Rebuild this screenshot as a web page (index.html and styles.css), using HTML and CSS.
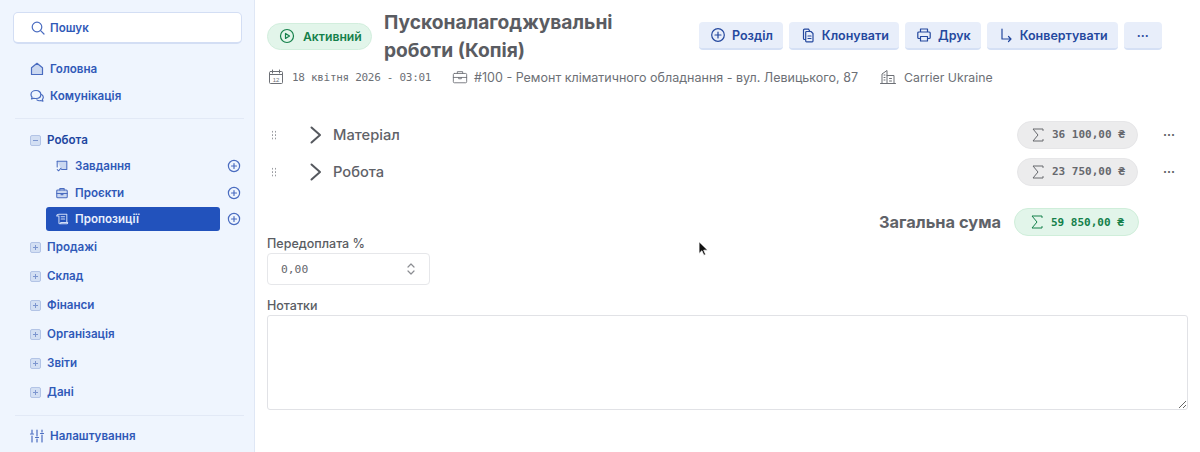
FILE: index.html
```html
<!DOCTYPE html>
<html lang="uk">
<head>
    <meta charset="UTF-8">
    <meta name="viewport" content="width=device-width, initial-scale=1.0">
    <title>Пропозиції</title>
    <link rel="stylesheet" href="styles.css">
</head>
<body>
    <div class="layout">
        <!-- Sidebar -->
        <aside class="sidebar">
            <div class="search">
                <svg class="icon" viewBox="0 0 16 16"><circle cx="7" cy="7" r="4.8"/><path d="M10.6 10.6 14 14"/></svg>
                <span>Пошук</span>
            </div>
            <nav class="nav-top">
                <a class="nav-link">
                    <svg class="icon" viewBox="0 0 16 16"><path class="fill" d="M2.5 13.5V6.8L8 2.3l5.500 4.500v6.700z"/></svg>
                    <span>Головна</span>
                </a>
                <a class="nav-link">
                    <svg class="icon" viewBox="0 0 16 16"><path d="M7 2.500c-3 0-5 1.800-5 4 0 1 .4 1.900 1.100 2.600L2.500 11l2.400-.8c.6.200 1.300.3 2.100.3 3 0 4.800-1.800 4.800-4s-1.800-4-4.800-4z"/><path d="M12.600 6.500c1 .6 1.700 1.600 1.700 2.800 0 .8-.3 1.500-.9 2.100l.5 1.800-2.100-.7c-1.300.4-2.900.2-3.900-.6"/></svg>
                    <span>Комунікація</span>
                </a>
            </nav>
            <div class="divider"></div>
            <div class="nav-group-head open">
                <span class="toggle"><i></i></span>
                <span>Робота</span>
            </div>
            <div class="sub-list">
                <div class="sub-row">
                    <a class="sub-link">
                        <svg class="icon" viewBox="0 0 16 16"><path class="fill" d="M2.500 2.500h11v9.500H7.500"/><path d="M2.500 2.500v6.500M2.500 12l1.500 1.500 3-3"/></svg>
                        <span>Завдання</span>
                    </a>
                    <svg class="add" viewBox="0 0 14 14"><circle cx="7" cy="7" r="5.600"/><path d="M7 4.500v5M4.500 7h5"/></svg>
                </div>
                <div class="sub-row">
                    <a class="sub-link">
                        <svg class="icon" viewBox="0 0 16 16"><rect class="fill" x="2" y="4.500" width="12" height="9" rx="1.200"/><path d="M5.500 4.500V3h5v1.500M2 8.500h12M7 8.500v1.500h2V8.500"/></svg>
                        <span>Проєкти</span>
                    </a>
                    <svg class="add" viewBox="0 0 14 14"><circle cx="7" cy="7" r="5.600"/><path d="M7 4.500v5M4.500 7h5"/></svg>
                </div>
                <div class="sub-row">
                    <a class="sub-link active">
                        <svg class="icon" viewBox="0 0 16 16"><path d="M4.500 2.500h9v9M4.500 2.500c-1.500 0-2.500.5-2.500 2h2.500v8c0 .7.500 1 1 1h8c.7 0 1-.5 1-1.500H6.500v1.500M7 5.500h4M7 8h4"/></svg>
                        <span>Пропозиції</span>
                    </a>
                    <svg class="add" viewBox="0 0 14 14"><circle cx="7" cy="7" r="5.600"/><path d="M7 4.500v5M4.500 7h5"/></svg>
                </div>
            </div>
            <div class="nav-group">
                <div class="nav-group-head"><span class="toggle plus"><i></i></span><span>Продажі</span></div>
                <div class="nav-group-head"><span class="toggle plus"><i></i></span><span>Склад</span></div>
                <div class="nav-group-head"><span class="toggle plus"><i></i></span><span>Фінанси</span></div>
                <div class="nav-group-head"><span class="toggle plus"><i></i></span><span>Організація</span></div>
                <div class="nav-group-head"><span class="toggle plus"><i></i></span><span>Звіти</span></div>
                <div class="nav-group-head"><span class="toggle plus"><i></i></span><span>Дані</span></div>
            </div>
            <div class="divider bottom"></div>
            <a class="nav-link">
                <svg class="icon" viewBox="0 0 16 16"><path d="M3 2v3M3 8v6M8 2v6M8 11v3M13 2v2M13 7v7M1.500 6h3M6.500 9.500h3M11.500 5.500h3"/></svg>
                <span>Налаштування</span>
            </a>
        </aside>

        <!-- Main content -->
        <main class="content">
            <div class="top-row">
                <div class="status">
                    <svg viewBox="0 0 16 16"><circle cx="8" cy="8" r="6.500"/><path d="M6.500 5.500v5l4-2.500z"/></svg>
                    <span>Активний</span>
                </div>
                <h1 class="page-title">Пусконалагоджувальні роботи (Копія)</h1>
                <div class="actions">
                    <button class="btn"><svg viewBox="0 0 16 16"><circle cx="8" cy="8" r="6.300"/><path d="M8 5v6M5 8h6"/></svg>Розділ</button>
                    <button class="btn"><svg viewBox="0 0 16 16"><path d="M6.500 4.500h4.500l2 2v7.500a.8.8 0 0 1-.8.8H6.500a.8.8 0 0 1-.8-.8V5.300a.8.8 0 0 1 .8-.8zM5.700 12.500H4.500a1 1 0 0 1-1-1V3.200a1 1 0 0 1 1-1h4l1.500 2.300M8 9h3M8 11.500h3"/></svg>Клонувати</button>
                    <button class="btn"><svg viewBox="0 0 16 16"><path d="M4.500 5V2h7v3M4.500 11.500H2.800a1 1 0 0 1-1-1V6a1 1 0 0 1 1-1h10.400a1 1 0 0 1 1 1v4.500a1 1 0 0 1-1 1h-1.700M4.500 9.500h7V14h-7z"/></svg>Друк</button>
                    <button class="btn"><svg viewBox="0 0 16 16"><path d="M4 2v10h9M10.500 9.500 13 12l-2.500 2.500"/></svg>Конвертувати</button>
                    <button class="btn btn-more">···</button>
                </div>
            </div>

            <div class="meta">
                <span class="meta-item date">
                    <svg viewBox="0 0 16 16"><rect x="1.500" y="2.500" width="13" height="12" rx="1"/><path d="M1.500 5.500h13M4.500 1v3M11.500 1v3"/><text x="8" y="12.800" class="cal-num">12</text></svg>
                    <span class="meta-date">18 квітня 2026 - 03:01</span>
                </span>
                <span class="meta-item job">
                    <svg viewBox="0 0 18 16"><rect x="1.500" y="4" width="15" height="10.500" rx="1.200"/><path d="M6 4V2h6v2M1.500 8.500h15M7.500 8.500v1.500h3V8.500"/></svg>
                    <span>#100 - Ремонт кліматичного обладнання - вул. Левицького, 87</span>
                </span>
                <span class="meta-item company">
                    <svg viewBox="0 0 16 16"><path d="M.5 14.500h15M2 14.500V5l5-3.500v13M7 6.500h7v8M4 6h1M4 8.500h1M4 11h1M9.500 9.500h2M9.500 12h2"/></svg>
                    <span>Carrier Ukraine</span>
                </span>
            </div>

            <div class="sections">
                <div class="section-row">
                    <span class="grip"></span>
                    <svg class="chevron" viewBox="0 0 12 18"><path d="M1.500 1.500 10 9l-8.500 7.500"/></svg>
                    <span class="section-name">Матеріал</span>
                    <span class="sum"><svg viewBox="0 0 14 14"><path d="M12 2.500V1H2l5 6-5 6h10v-1.500"/></svg>36 100,00 ₴</span>
                    <span class="dots">···</span>
                </div>
                <div class="section-row">
                    <span class="grip"></span>
                    <svg class="chevron" viewBox="0 0 12 18"><path d="M1.500 1.500 10 9l-8.500 7.500"/></svg>
                    <span class="section-name">Робота</span>
                    <span class="sum"><svg viewBox="0 0 14 14"><path d="M12 2.500V1H2l5 6-5 6h10v-1.500"/></svg>23 750,00 ₴</span>
                    <span class="dots">···</span>
                </div>
            </div>

            <div class="total">
                <span class="total-label">Загальна сума</span>
                <span class="sum sum-total"><svg viewBox="0 0 14 14"><path d="M12 2.500V1H2l5 6-5 6h10v-1.500"/></svg>59 850,00 ₴</span>
            </div>

            <label class="field-label">Передоплата %</label>
            <div class="number-input">
                <span>0,00</span>
                <svg viewBox="0 0 10 14"><path d="M2 5l3-3 3 3M2 9l3 3 3-3"/></svg>
            </div>

            <label class="field-label notes-label">Нотатки</label>
            <textarea class="notes"></textarea>
        </main>
    </div>

    <svg class="cursor" viewBox="0 0 12 18"><path d="M1 1v13l3.200-3 2.200 5 2-.9-2.200-4.800H10.500z"/></svg>
</body>
</html>
```

FILE: styles.css
```css
* {
    margin: 0;
    padding: 0;
    box-sizing: border-box;
}

html, body {
    height: 452px;
    overflow: hidden;
}

body {
    font-family: Inter, 'Noto Sans', sans-serif;
    background: white;
    color: #5c5f66;
}

.layout {
    display: flex;
    height: 452px;
}

svg {
    fill: none;
    stroke: currentColor;
    stroke-width: 1.2;
    stroke-linecap: round;
    stroke-linejoin: round;
    flex-shrink: 0;
}

/* Sidebar */
.sidebar {
    width: 255px;
    flex-shrink: 0;
    background: #eff5fe;
    border-right: 1px solid #dfe7f5;
    padding: 12px 12px 0 13px;
    color: #3059b8;
    font-size: 11.600px;
    font-weight: 600;
}

.icon {
    width: 16px;
    height: 16px;
    color: #4a6cc0;
}

.icon .fill {
    fill: #cbd8f0;
}

.search {
    display: flex;
    align-items: center;
    gap: 4px;
    width: 229px;
    height: 32px;
    padding-left: 16px;
    background: white;
    border: 1px solid #d3def4;
    border-bottom-width: 2px;
    border-radius: 5px;
}

.nav-top {
    margin-top: 11px;
}

.nav-link {
    display: flex;
    align-items: center;
    gap: 5px;
    height: 27px;
    padding-left: 16px;
}

.divider {
    width: 229px;
    height: 1px;
    margin: 9px 0 8px 2px;
    background: #e2e9f6;
}

.divider.bottom {
    margin: 8px 0 7px 2px;
}

.nav-group-head {
    display: flex;
    align-items: center;
    gap: 6px;
    height: 29px;
    padding-left: 17px;
}

.nav-group-head.open {
    height: 26px;
    color: #20459f;
}

.toggle {
    position: relative;
    width: 11px;
    height: 11px;
    background: #d3dff3;
    border: 1px solid #b3c4e6;
    border-radius: 2px;
}

.toggle i {
    position: absolute;
    left: 2px;
    top: 4px;
    width: 5px;
    height: 1px;
    background: #7d96cf;
}

.toggle.plus::after {
    content: '';
    position: absolute;
    left: 4px;
    top: 2px;
    width: 1px;
    height: 5px;
    background: #7d96cf;
}

.sub-row {
    display: flex;
    align-items: center;
    height: 26.500px;
    padding-left: 33px;
}

.sub-link {
    display: flex;
    align-items: center;
    gap: 6px;
    width: 174px;
    height: 24px;
    padding-left: 9px;
    border-radius: 3px;
}

.sub-link .icon {
    width: 14px;
    height: 14px;
}

.sub-link.active {
    background: #2252bc;
    color: #e8effc;
}

.sub-link.active .icon {
    color: #cfdcf6;
}

.add {
    width: 14px;
    height: 14px;
    margin-left: 7px;
    color: #4a6cc0;
}

/* Main */
.content {
    flex: 1;
    padding: 8px 12px 0;
    min-width: 0;
}

.top-row {
    display: flex;
    align-items: center;
}

.status {
    display: flex;
    align-items: center;
    gap: 8px;
    width: 105px;
    height: 27px;
    padding-left: 11px;
    background: #e2f5ea;
    border: 1px solid #d2eedd;
    border-radius: 14px;
    color: #14804a;
    font-size: 12.200px;
    font-weight: 600;
    white-space: nowrap;
}

.status svg {
    width: 16px;
    height: 16px;
}

.page-title {
    width: 260px;
    margin-left: 12px;
    font-size: 19.200px;
    line-height: 28px;
    font-weight: 700;
    color: #5a5c62;
}

.actions {
    display: flex;
    gap: 6px;
    margin-left: 55px;
}

.btn {
    display: flex;
    align-items: center;
    gap: 6px;
    height: 28px;
    padding: 0 10px 0 11px;
    background: #e8eefa;
    border: none;
    border-bottom: 2px solid #d5e0f5;
    border-radius: 4px;
    color: #24489e;
    font-family: inherit;
    font-size: 12.500px;
    font-weight: 600;
    white-space: nowrap;
}

.btn svg {
    width: 16px;
    height: 16px;
}

.btn-more {
    width: 38px;
    padding: 0;
    justify-content: center;
}

.meta {
    display: flex;
    align-items: center;
    margin-top: 3px;
    height: 20px;
    font-size: 12.500px;
    color: #6d7076;
}

.meta-item {
    display: flex;
    align-items: center;
    gap: 8px;
    white-space: nowrap;
}

.meta-item svg {
    width: 16px;
    height: 16px;
    color: #6d7076;
    stroke-width: 1;
}

.meta-item.date {
    margin-left: 1px;
}

.meta-date {
    font-family: 'DejaVu Sans Mono', monospace;
    font-size: 11px;
    letter-spacing: -.3px;
}

.cal-num {
    font-size: 6px;
    font-family: 'Liberation Sans', sans-serif;
    text-anchor: middle;
    fill: currentColor;
    stroke: none;
}

.meta-item.job {
    gap: 6px;
    margin-left: 21px;
}

.meta-item.company {
    margin-left: 22px;
    font-size: 12.300px;
}

.sections {
    margin-top: 29px;
}

.section-row {
    position: relative;
    display: flex;
    align-items: center;
    height: 37px;
}

.grip {
    width: 6px;
    height: 10px;
    margin-left: 4px;
    background-image: radial-gradient(circle, #9a9ca1 0.8px, transparent 0.9px);
    background-size: 3px 3.400px;
}

.chevron {
    width: 12px;
    height: 18px;
    margin-left: 33px;
    stroke-width: 2;
    color: #55585e;
}

.section-name {
    margin-left: 11px;
    font-size: 14.700px;
    font-weight: 500;
    color: #5f6268;
}

.sum {
    display: flex;
    align-items: center;
    gap: 7px;
    width: 121px;
    height: 28px;
    margin-left: auto;
    padding-left: 13px;
    background: #ececed;
    border: 1px solid #e6e6e8;
    border-radius: 14px;
    font-family: 'DejaVu Sans Mono', monospace;
    font-size: 11px;
    font-weight: 700;
    color: #66686d;
    white-space: nowrap;
}

.sum svg {
    width: 14px;
    height: 14px;
    stroke-width: 1;
}

.section-row .sum {
    margin-right: 50px;
}

.dots {
    position: absolute;
    right: 13px;
    font-size: 12px;
    font-weight: 700;
}

.total {
    display: flex;
    align-items: center;
    justify-content: flex-end;
    gap: 13px;
    height: 28px;
    margin-top: 18px;
    padding-right: 49px;
}

.total-label {
    font-size: 16.400px;
    font-weight: 700;
    color: #5f6268;
}

.sum-total {
    width: 125px;
    margin-left: 0;
    padding-left: 15px;
    background: #e2f5ea;
    border-color: #cfeeda;
    color: #14804a;
}

.field-label {
    display: block;
    margin-top: -1px;
    font-size: 12.500px;
    line-height: 17px;
    font-weight: 500;
    color: #5a5d63;
}

.number-input {
    display: flex;
    align-items: center;
    justify-content: space-between;
    width: 163px;
    height: 32px;
    margin-top: 1px;
    padding: 0 13px;
    border: 1px solid #e6e7ea;
    border-radius: 4px;
    font-family: 'DejaVu Sans Mono', monospace;
    font-size: 11.300px;
    color: #66686d;
}

.number-input svg {
    width: 10px;
    height: 14px;
    color: #8b8d92;
}

.notes-label {
    margin-top: 12px;
}

.notes {
    display: block;
    width: 921px;
    height: 95px;
    margin-top: 1px;
    border: 1px solid #e1e2e6;
    border-radius: 3px;
    background: white;
}

.cursor {
    position: absolute;
    left: 698px;
    top: 241px;
    width: 11px;
    height: 16px;
    fill: #111;
    stroke: white;
    stroke-width: .8;
}
```
